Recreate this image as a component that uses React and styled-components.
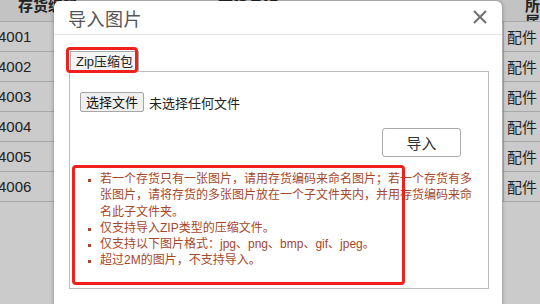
import React from "react";
import styled, { createGlobalStyle } from "styled-components";

const GlobalStyle = createGlobalStyle`
  html, body {
    margin: 0;
    padding: 0;
    width: 540px;
    height: 304px;
    overflow: hidden;
    background: #cbcbcb;
    font-family: "Liberation Sans", "Noto Sans CJK SC", sans-serif;
  }
`;

const rows = ["4001", "4002", "4003", "4004", "4005", "4006"];
const tips = [
  "若一个存货只有一张图片，请用存货编码来命名图片；若一个存货有多张图片，请将存货的多张图片放在一个子文件夹内，并用存货编码来命名此子文件夹。",
  "仅支持导入ZIP类型的压缩文件。",
  "仅支持以下图片格式：jpg、png、bmp、gif、jpeg。",
  "超过2M的图片，不支持导入。",
];

function App() {
  return (
    <Page>
      <GlobalStyle />
      <Table>
        <HeadRow>
          <HeadCell>存货编码</HeadCell>
          <HeadCell>存货名称</HeadCell>
          <HeadCell>所属</HeadCell>
        </HeadRow>
        {rows.map((code) => (
          <Row key={code}>
            <Cell>{code}</Cell>
            <Cell />
            <Cell>配件</Cell>
          </Row>
        ))}
      </Table>

      <Dialog>
        <Header>
          <Title>导入图片</Title>
          <Close aria-label="close">
            <svg width="14" height="14" viewBox="0 0 14 14">
              <path d="M1 1L13 13M13 1L1 13" stroke="#6f6f6f" strokeWidth="2" />
            </svg>
          </Close>
        </Header>
        <Body>
          <Tab>Zip压缩包</Tab>
          <Panel>
            <FileRow>
              <FileButton>选择文件</FileButton>
              <FileName>未选择任何文件</FileName>
            </FileRow>
            <ImportRow>
              <ImportButton>导入</ImportButton>
            </ImportRow>
            <Tips>
              {tips.map((t) => (
                <li key={t}>{t}</li>
              ))}
            </Tips>
          </Panel>
        </Body>
        <Mark $left={12} $top={46} $width={72} $height={26} />
        <Mark $left={18} $top={164} $width={333} $height={120} />
      </Dialog>
    </Page>
  );
}

const Page = styled.div`
  position: relative;
  width: 540px;
  height: 304px;
  overflow: hidden;
`;

const Table = styled.div`
  display: flex;
  flex-direction: column;
`;

const HeadRow = styled.div`
  display: grid;
  grid-template-columns: 200px 303px 1fr;
  height: 21px;
  background: #c3c3c3;
  border-bottom: 1px solid #a8a8a8;
  overflow: hidden;
`;

const HeadCell = styled.div`
  font-size: 15px;
  font-weight: bold;
  color: #222;
  line-height: 16px;
  padding-left: 18px;
  margin-top: -2px;
  &:last-child {
    padding-left: 22px;
  }
`;

const Row = styled.div`
  display: grid;
  grid-template-columns: 200px 303px 1fr;
  height: 29px;
  border-bottom: 1px solid #a8a8a8;
  align-items: center;
`;

const Cell = styled.div`
  font-size: 15px;
  color: #222;
  margin-left: -2px;
  &:last-child {
    margin-left: 0;
    padding-left: 3px;
    border-left: 1px solid #a8a8a8;
    height: 100%;
    display: flex;
    align-items: center;
  }
`;

const Dialog = styled.div`
  position: absolute;
  left: 54px;
  top: 1px;
  width: 448px;
  height: 330px;
  background: #fff;
  border-radius: 6px;
  box-shadow: 0 0 4px rgba(0, 0, 0, 0.35);
`;

const Header = styled.div`
  display: flex;
  align-items: center;
  justify-content: space-between;
  height: 33px;
  padding: 0 15px 0 14px;
  border-bottom: 1px solid #e3e3e3;
`;

const Title = styled.div`
  font-size: 18px;
  color: #555;
  font-family: "Noto Sans CJK SC", sans-serif;
  letter-spacing: 0.5px;
`;

const Close = styled.div`
  display: flex;
  margin-top: -2px;
`;

const Body = styled.div`
  padding: 16px 13px 0 15px;
  display: flex;
  flex-direction: column;
  align-items: flex-start;
`;

const Tab = styled.div`
  margin-left: 1px;
  padding: 0 5px;
  height: 19px;
  line-height: 19px;
  font-size: 13px;
  color: #222;
  background: #f4f4f4;
  border: 1px solid #aaa;
  border-bottom: none;
`;

const Panel = styled.div`
  align-self: stretch;
  border: 1px solid #bdbdbd;
  padding: 20px 27px 19px 10px;
`;

const FileRow = styled.div`
  display: flex;
  align-items: center;
  gap: 5px;
`;

const FileButton = styled.div`
  height: 18px;
  line-height: 18px;
  padding: 0 5px;
  font-size: 13px;
  color: #111;
  background: #efefef;
  border: 1px solid #a6a6a6;
  border-radius: 2px;
  font-family: "Noto Sans CJK SC", sans-serif;
`;

const FileName = styled.div`
  font-size: 13px;
  color: #222;
  font-family: "Noto Sans CJK SC", sans-serif;
`;

const ImportRow = styled.div`
  display: flex;
  justify-content: flex-end;
  margin-top: 16px;
`;

const ImportButton = styled.div`
  width: 77px;
  height: 27px;
  display: flex;
  align-items: center;
  justify-content: center;
  font-size: 15px;
  color: #333;
  border: 1px solid #a9a9a9;
  border-radius: 3px;
  background: #fff;
  font-family: "Noto Sans CJK SC", sans-serif;
`;

const Tips = styled.ul`
  margin: 14px 0 0;
  padding-left: 20px;
  width: 376px;
  color: #a5472c;
  font-size: 12px;
  line-height: 16.3px;
  list-style: square;
  li::marker {
    font-size: 9px;
  }
`;

const Mark = styled.div`
  position: absolute;
  left: ${(p) => p.$left}px;
  top: ${(p) => p.$top}px;
  width: ${(p) => p.$width}px;
  height: ${(p) => p.$height}px;
  box-sizing: border-box;
  border: 3px solid #f0201c;
  border-radius: 4px;
  pointer-events: none;
`;

export default App;
